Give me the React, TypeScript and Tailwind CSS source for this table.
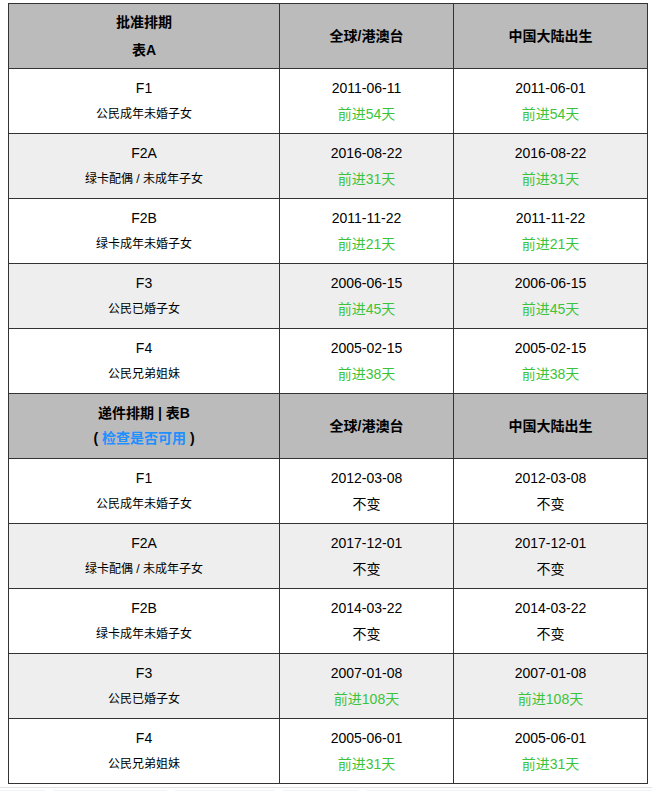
import React from "react";

type Row = {
  code: string;
  label: string;
  global: string;
  globalNote: string;
  china: string;
  chinaNote: string;
};

const tableA: Row[] = [
  { code: "F1", label: "公民成年未婚子女", global: "2011-06-11", globalNote: "前进54天", china: "2011-06-01", chinaNote: "前进54天" },
  { code: "F2A", label: "绿卡配偶 / 未成年子女", global: "2016-08-22", globalNote: "前进31天", china: "2016-08-22", chinaNote: "前进31天" },
  { code: "F2B", label: "绿卡成年未婚子女", global: "2011-11-22", globalNote: "前进21天", china: "2011-11-22", chinaNote: "前进21天" },
  { code: "F3", label: "公民已婚子女", global: "2006-06-15", globalNote: "前进45天", china: "2006-06-15", chinaNote: "前进45天" },
  { code: "F4", label: "公民兄弟姐妹", global: "2005-02-15", globalNote: "前进38天", china: "2005-02-15", chinaNote: "前进38天" },
];

const tableB: Row[] = [
  { code: "F1", label: "公民成年未婚子女", global: "2012-03-08", globalNote: "不变", china: "2012-03-08", chinaNote: "不变" },
  { code: "F2A", label: "绿卡配偶 / 未成年子女", global: "2017-12-01", globalNote: "不变", china: "2017-12-01", chinaNote: "不变" },
  { code: "F2B", label: "绿卡成年未婚子女", global: "2014-03-22", globalNote: "不变", china: "2014-03-22", chinaNote: "不变" },
  { code: "F3", label: "公民已婚子女", global: "2007-01-08", globalNote: "前进108天", china: "2007-01-08", chinaNote: "前进108天" },
  { code: "F4", label: "公民兄弟姐妹", global: "2005-06-01", globalNote: "前进31天", china: "2005-06-01", chinaNote: "前进31天" },
];

const cell = "border border-[#333333] text-center align-middle p-0";

const Note = ({ text }: { text: string }) => (
  <div className={text === "不变" ? "text-black" : "text-[#3bc43b]"}>{text}</div>
);

const BodyRows = ({ rows }: { rows: Row[] }) => (
  <>
    {rows.map((r, i) => (
      <tr key={r.code} className={`h-[65px] ${i % 2 === 1 ? "bg-[#eeeeee]" : "bg-white"}`}>
        <td className={cell}>
          <div className="text-[14px] leading-[26px]">{r.code}</div>
          <div className="text-[12px] leading-[26px]">{r.label}</div>
        </td>
        <td className={`${cell} text-[14px] leading-[26px]`}>
          <div>{r.global}</div>
          <Note text={r.globalNote} />
        </td>
        <td className={`${cell} text-[14px] leading-[26px]`}>
          <div>{r.china}</div>
          <Note text={r.chinaNote} />
        </td>
      </tr>
    ))}
  </>
);

export default function App() {
  return (
    <div
      className="bg-white text-black"
      style={{ fontFamily: '"Liberation Sans", "Noto Sans CJK SC", sans-serif' }}
    >
      <div className="pl-[8px] pt-[3px]">
        <table className="border-collapse w-[639px] table-fixed">
          <colgroup>
            <col className="w-[271px]" />
            <col className="w-[174px]" />
            <col className="w-[194px]" />
          </colgroup>
          <tbody>
            <tr className="h-[65px] bg-[#bbbbbb]">
              <td className={`${cell} font-bold text-[14px] leading-[28px]`}>
                <div>批准排期</div>
                <div>表A</div>
              </td>
              <td className={`${cell} font-bold text-[14px]`}>全球/港澳台</td>
              <td className={`${cell} font-bold text-[14px]`}>中国大陆出生</td>
            </tr>
            <BodyRows rows={tableA} />
            <tr className="h-[65px] bg-[#bbbbbb]">
              <td className={`${cell} font-bold text-[14px] leading-[25px]`}>
                <div>递件排期 | 表B</div>
                <div>
                  ( <span className="text-[#1e90ff]">检查是否可用</span> )
                </div>
              </td>
              <td className={`${cell} font-bold text-[14px]`}>全球/港澳台</td>
              <td className={`${cell} font-bold text-[14px]`}>中国大陆出生</td>
            </tr>
            <BodyRows rows={tableB} />
          </tbody>
        </table>
      </div>
      <div className="mt-[3px] border-t border-[#e3e3e3] flex gap-[8px] pt-[2px] h-[6px]">
        <div className="w-[45px] bg-[#eef6fd]" />
        <div className="w-[114px] bg-[#eef6fd]" />
        <div className="w-[100px] bg-[#eef6fd]" />
        <div className="w-[75px] bg-[#eef6fd]" />
        <div className="flex-1 bg-[#eef6fd]" />
      </div>
    </div>
  );
}
